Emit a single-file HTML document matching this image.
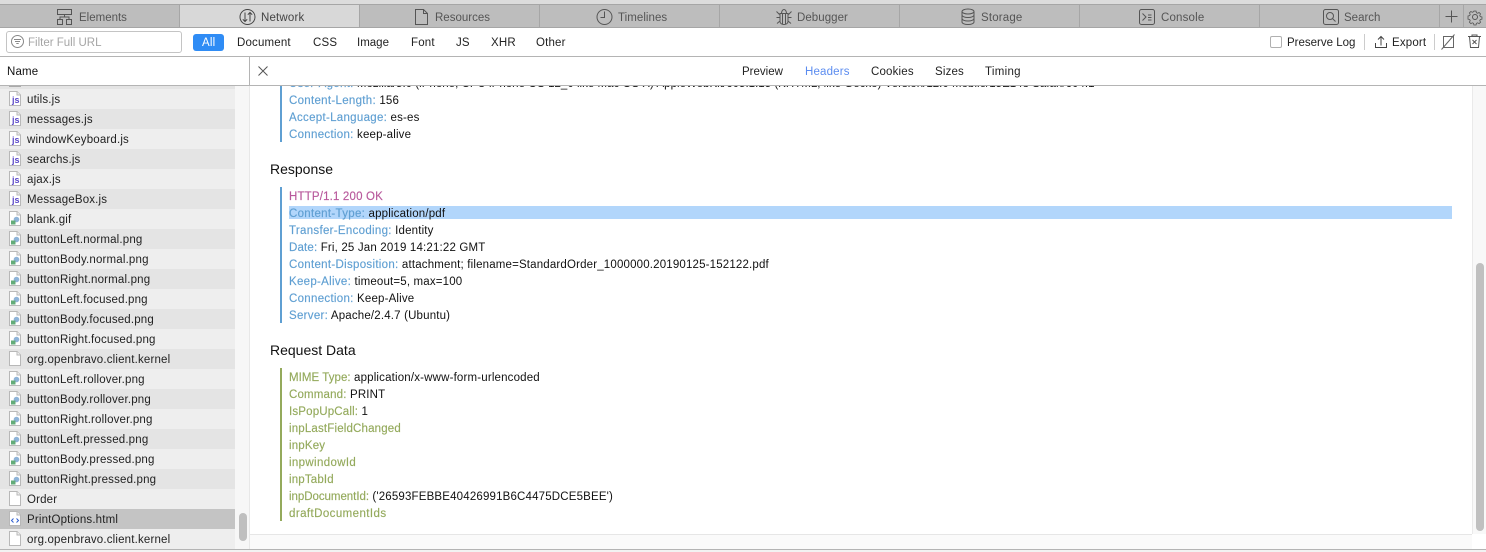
<!DOCTYPE html>
<html><head><meta charset="utf-8">
<style>
html,body{margin:0;padding:0;width:1486px;height:552px;overflow:hidden;background:#fff;font-family:"Liberation Sans",sans-serif;font-size:11.5px;letter-spacing:.17px;color:#222}
.a{position:absolute;white-space:nowrap}
.tab{position:absolute;top:5px;height:22px;background:#bdbdbd;border-right:1px solid #a6a6a6;box-sizing:content-box}
.tab span{position:absolute;top:2px;line-height:22px;color:#555;white-space:nowrap}
.tab svg{position:absolute;top:3px}
.tab.on{background:#d8d8d8}
.tab.on span{color:#444}
.row{position:absolute;left:0;width:235px;height:20px;background:#eeeeee}
.row.d{background:#e4e4e4}
.row.s{background:#c4c4c4}
.row span{position:absolute;left:27px;top:1px;line-height:20px;color:#222;white-space:nowrap}
.row svg{position:absolute;left:9px;top:2px;width:12px;height:15px}
.l{position:absolute;left:289px;white-space:nowrap;color:#111;height:17px;line-height:17px}
.b{color:#5f9fd2;letter-spacing:.3px;-webkit-text-stroke:.15px #5f9fd2}
.g{color:#94aa5c;-webkit-text-stroke:.15px #94aa5c}
.h{position:absolute;left:270px;font-size:14px;letter-spacing:0;color:#111;white-space:nowrap}
.f{position:absolute;top:36px;line-height:14px;color:#222;white-space:nowrap}
.sub{position:absolute;top:65px;line-height:14px;color:#222;white-space:nowrap}
</style></head><body>
<div class="a" style="left:0;top:0;width:1486px;height:4px;background:#dcdcdc"></div>
<div class="a" style="left:0;top:4px;width:1486px;height:1px;background:#a6a6a6"></div>
<div class="a" style="left:0;top:27px;width:1486px;height:1px;background:#a6a6a6"></div>

<div class="tab" style="left:0;width:179px"><svg style="left:56px" width="18" height="18" viewBox="0 0 18 18" fill="none" stroke="#555"><path d="M1.500 1.500h14v5h-14zM1.500 11.500h5v5h-5zM10.500 11.500h5v5h-5zM8.500 6.500v2.500M4 11.500V9h9v2.500"/></svg><span style="left:79px;letter-spacing:0">Elements</span></div>
<div class="tab on" style="left:180px;width:179px"><svg style="left:59px" width="18" height="18" viewBox="0 0 18 18" fill="none" stroke="#444"><circle cx="8.500" cy="9" r="7.500"/><path d="M6 4.500v9M3.800 11.300 6 13.500l2.200-2.200M11 13.500v-9M8.800 6.700 11 4.500l2.200 2.200"/></svg><span style="left:81px">Network</span></div>
<div class="tab" style="left:360px;width:179px"><svg style="left:54px" width="16" height="18" viewBox="0 0 16 18" fill="none" stroke="#555"><path d="M1.500 1.500h8l4 4v11h-12zM9.500 1.500v4h4"/></svg><span style="left:75px;letter-spacing:0">Resources</span></div>
<div class="tab" style="left:540px;width:179px"><svg style="left:56px" width="18" height="18" viewBox="0 0 18 18" fill="none" stroke="#555"><circle cx="8.500" cy="9" r="7.500"/><path d="M8.500 3.500V9.500H4.500"/></svg><span style="left:78px;letter-spacing:.05px">Timelines</span></div>
<div class="tab" style="left:720px;width:179px"><svg style="left:55px" width="18" height="18" viewBox="0 0 18 18" fill="none" stroke="#555"><path d="M5 5.500h8v8c0 2-2 3-4 3s-4-1-4-3zM6.500 5.500c0-2 1-4 2.500-4s2.500 2 2.500 4M7.500 6v10M10.500 6v10M1.500 3.500l3 3M16.500 3.500l-3 3M1.500 9.500H5M16.500 9.500H13M2 15.500l3-2.500M16 15.500l-3-2.500"/></svg><span style="left:77px;letter-spacing:.05px">Debugger</span></div>
<div class="tab" style="left:900px;width:179px"><svg style="left:61px" width="16" height="18" viewBox="0 0 16 18" fill="none" stroke="#555"><ellipse cx="7" cy="3.500" rx="6" ry="2.500"/><path d="M1 3.500v10.500c0 1.400 2.700 2.500 6 2.500s6-1.100 6-2.500V3.500M1 7c0 1.400 2.700 2.500 6 2.500S13 8.400 13 7M1 10.500c0 1.400 2.700 2.500 6 2.500s6-1.100 6-2.500"/></svg><span style="left:81px">Storage</span></div>
<div class="tab" style="left:1080px;width:179px"><svg style="left:58px" width="18" height="18" viewBox="0 0 18 18" fill="none" stroke="#555"><rect x="1.500" y="1.500" width="15" height="15" rx="2"/><path d="M4.500 5.500 8 9l-3.500 3.500M10 7h3.500M10 9.500h3.500M10 12h3.500"/></svg><span style="left:81px">Console</span></div>
<div class="tab" style="left:1260px;width:179px"><svg style="left:62px" width="18" height="18" viewBox="0 0 18 18" fill="none" stroke="#555"><rect x="1.500" y="1.500" width="15" height="15" rx="2"/><circle cx="8" cy="8" r="3.500"/><path d="m10.500 10.500 3 3"/></svg><span style="left:84px;letter-spacing:0">Search</span></div>
<div class="tab" style="left:1440px;width:23px"><svg style="left:3px;top:3px" width="17" height="17" viewBox="0 0 17 17" fill="none" stroke="#555"><path d="M8.500 2.500v12M2.500 8.500h12"/></svg></div>
<div class="tab" style="left:1464px;width:22px;border-right:0"><svg style="left:2px;top:3px" width="18" height="18" viewBox="0 0 18 18" fill="none" stroke="#555"><circle cx="9" cy="9" r="2.500"/><path d="M7.700 1.800h2.600l.4 2 1.500.7 1.800-1 1.800 1.800-1 1.800.7 1.500 2 .4v2.600l-2 .4-.7 1.500 1 1.800-1.800 1.800-1.800-1-1.500.7-.4 2H7.700l-.4-2-1.500-.7-1.800 1-1.800-1.800 1-1.800-.7-1.500-2-.4V7.800l2-.4.700-1.500-1-1.800 1.800-1.800 1.800 1 1.500-.7z" transform="translate(1.600 1.600) scale(.82)"/></svg></div>

<div class="a" style="left:6px;top:31px;width:174px;height:20px;border:1px solid #c4c4c4;border-radius:3px;background:#fff"></div>
<svg class="a" style="left:10px;top:34px" width="16" height="16" viewBox="0 0 16 16" fill="none" stroke="#888"><circle cx="7.500" cy="7.500" r="6"/><path d="M4 5.500h7M5 7.500h5M6.300 9.500h2.400"/></svg>
<div class="f" style="left:28px;color:#a5a5a5;letter-spacing:0">Filter Full URL</div>
<div class="a" style="left:193px;top:34px;width:31px;height:17px;background:#2f8cf5;border-radius:3px"></div>
<div class="f" style="left:202px;color:#fff">All</div>
<div class="f" style="left:237px">Document</div>
<div class="f" style="left:313px">CSS</div>
<div class="f" style="left:357px;letter-spacing:0">Image</div>
<div class="f" style="left:411px">Font</div>
<div class="f" style="left:456px">JS</div>
<div class="f" style="left:491px">XHR</div>
<div class="f" style="left:536px">Other</div>
<div class="a" style="left:1270px;top:36px;width:10px;height:10px;border:1px solid #b0b0b0;border-radius:2px;background:#fff"></div>
<div class="f" style="left:1287px;letter-spacing:0">Preserve Log</div>
<div class="a" style="left:1364px;top:34px;width:1px;height:16px;background:#ccc"></div>
<svg class="a" style="left:1374px;top:35px" width="14" height="15" viewBox="0 0 14 15" fill="none" stroke="#444"><path d="M7 10.500V1.500M4 4.500 7 1.500l3 3M1.500 8v4.500h11V8"/></svg>
<div class="f" style="left:1392px">Export</div>
<div class="a" style="left:1434px;top:34px;width:1px;height:16px;background:#ccc"></div>
<svg class="a" style="left:1440px;top:34px" width="16" height="16" viewBox="0 0 16 16" fill="none" stroke="#666"><path d="M3.500 2.500h10v11h-10zM1.500 15.500l13-15"/></svg>
<svg class="a" style="left:1467px;top:34px" width="15" height="15" viewBox="0 0 15 15" fill="none" stroke="#555"><path d="M1 2.500h13M5 2.500v-1.500h5v1.500M2.500 2.500l1 11h8l1-11M5.500 6l4 4M9.500 6l-4 4"/></svg>
<div class="a" style="left:0;top:56px;width:1486px;height:1px;background:#b4b4b4"></div>

<div class="sub" style="left:7px;color:#111">Name</div>
<div class="a" style="left:249px;top:57px;width:1px;height:28px;background:#b4b4b4"></div>
<svg class="a" style="left:257px;top:65px" width="12" height="12" viewBox="0 0 12 12" fill="none" stroke="#555"><path d="M1.500 1.500l9 9M10.500 1.500l-9 9"/></svg>
<div class="sub" style="left:742px;letter-spacing:0">Preview</div>
<div class="sub" style="left:805px;color:#5b8cf0">Headers</div>
<div class="sub" style="left:871px">Cookies</div>
<div class="sub" style="left:935px">Sizes</div>
<div class="sub" style="left:985px;letter-spacing:.3px">Timing</div>

<div class="a" style="left:0;top:86px;width:235px;height:3px;background:#e4e4e4"></div>
<div class="a" style="left:9px;top:86px;width:12px;height:1px;background:#aaa"></div>
<div class="a" style="left:235px;top:86px;width:14px;height:463px;background:#f7f7f7"></div>
<div class="a" style="left:249px;top:86px;width:1px;height:463px;background:#e8e8e8"></div>

<svg width="0" height="0" style="position:absolute"><defs>
<symbol id="js" viewBox="0 0 12 15"><path d="M.5.500h7.500l3.500 3.500v10.500H.500z" fill="#fff" stroke="#b8b8b8"/><path d="M8 .500v3.500h3.500" fill="#eee" stroke="#b8b8b8"/><text x="3" y="12" font-size="9" font-weight="bold" font-family="Liberation Sans" letter-spacing="0" fill="#5a48c8">js</text></symbol>
<symbol id="im" viewBox="0 0 12 15"><path d="M.5.500h7.500l3.500 3.500v10.500H.500z" fill="#fff" stroke="#b8b8b8"/><path d="M8 .500v3.500h3.500" fill="#eee" stroke="#b8b8b8"/><circle cx="7.500" cy="8.500" r="2.800" fill="#8fb4d8"/><rect x="2" y="9.500" width="4.500" height="4" fill="#62ab78"/></symbol>
<symbol id="fi" viewBox="0 0 12 15"><path d="M.5.500h7.500l3.500 3.500v10.500H.500z" fill="#fff" stroke="#b8b8b8"/><path d="M8 .500v3.500h3.500" fill="#f2f2f2" stroke="#b8b8b8"/></symbol>
<symbol id="ht" viewBox="0 0 12 15"><path d="M.5.500h7.500l3.500 3.500v10.500H.500z" fill="#fff" stroke="#b8b8b8"/><path d="M8 .500v3.500h3.500" fill="#eee" stroke="#b8b8b8"/><path d="M4.500 7.500 2.500 9.500l2 2M7.500 7.500l2 2-2 2" fill="none" stroke="#2f5fd0"/></symbol>
</defs></svg>

<div class="row" style="top:89px"><svg><use href="#js"/></svg><span>utils.js</span></div>
<div class="row d" style="top:109px"><svg><use href="#js"/></svg><span>messages.js</span></div>
<div class="row" style="top:129px"><svg><use href="#js"/></svg><span>windowKeyboard.js</span></div>
<div class="row d" style="top:149px"><svg><use href="#js"/></svg><span>searchs.js</span></div>
<div class="row" style="top:169px"><svg><use href="#js"/></svg><span>ajax.js</span></div>
<div class="row d" style="top:189px"><svg><use href="#js"/></svg><span>MessageBox.js</span></div>
<div class="row" style="top:209px"><svg><use href="#im"/></svg><span>blank.gif</span></div>
<div class="row d" style="top:229px"><svg><use href="#im"/></svg><span>buttonLeft.normal.png</span></div>
<div class="row" style="top:249px"><svg><use href="#im"/></svg><span>buttonBody.normal.png</span></div>
<div class="row d" style="top:269px"><svg><use href="#im"/></svg><span>buttonRight.normal.png</span></div>
<div class="row" style="top:289px"><svg><use href="#im"/></svg><span>buttonLeft.focused.png</span></div>
<div class="row d" style="top:309px"><svg><use href="#im"/></svg><span>buttonBody.focused.png</span></div>
<div class="row" style="top:329px"><svg><use href="#im"/></svg><span>buttonRight.focused.png</span></div>
<div class="row d" style="top:349px"><svg><use href="#fi"/></svg><span>org.openbravo.client.kernel</span></div>
<div class="row" style="top:369px"><svg><use href="#im"/></svg><span>buttonLeft.rollover.png</span></div>
<div class="row d" style="top:389px"><svg><use href="#im"/></svg><span>buttonBody.rollover.png</span></div>
<div class="row" style="top:409px"><svg><use href="#im"/></svg><span>buttonRight.rollover.png</span></div>
<div class="row d" style="top:429px"><svg><use href="#im"/></svg><span>buttonLeft.pressed.png</span></div>
<div class="row" style="top:449px"><svg><use href="#im"/></svg><span>buttonBody.pressed.png</span></div>
<div class="row d" style="top:469px"><svg><use href="#im"/></svg><span>buttonRight.pressed.png</span></div>
<div class="row" style="top:489px"><svg><use href="#fi"/></svg><span>Order</span></div>
<div class="row s" style="top:509px"><svg><use href="#ht"/></svg><span>PrintOptions.html</span></div>
<div class="row" style="top:529px"><svg><use href="#fi"/></svg><span>org.openbravo.client.kernel</span></div>
<div class="a" style="left:239px;top:513px;width:8px;height:28px;background:#bfbfbf;border-radius:4px"></div>

<div class="a" style="left:280px;top:86px;width:2px;height:56px;background:#5f9fd2"></div>
<div class="a" style="left:289px;top:86px;width:1100px;height:4px;overflow:hidden"><div class="a" style="left:0;top:-10px;line-height:17px;color:#111;letter-spacing:.02px"><span class="b">User-Agent:</span> Mozilla/5.0 (iPhone; CPU iPhone OS 12_0 like Mac OS X) AppleWebKit/605.1.15 (KHTML, like Gecko) Version/12.0 Mobile/15E148 Safari/604.1</div></div>
<div class="l" style="top:93px"><span class="b">Content-Length:</span> 156</div>
<div class="l" style="top:110px"><span class="b">Accept-Language:</span> es-es</div>
<div class="l" style="top:127px"><span class="b">Connection:</span> keep-alive</div>

<div class="h" style="top:161px">Response</div>
<div class="a" style="left:280px;top:187px;width:2px;height:136px;background:#5f9fd2"></div>
<div class="l" style="top:189px;color:#b8599c;-webkit-text-stroke:.15px #b8599c">HTTP/1.1 200 OK</div>
<div class="a" style="left:289px;top:206px;width:1163px;height:13px;background:#b2d6fb"></div>
<div class="l" style="top:206px"><span class="b">Content-Type:</span> application/pdf</div>
<div class="l" style="top:223px"><span class="b">Transfer-Encoding:</span> Identity</div>
<div class="l" style="top:240px"><span class="b" style="letter-spacing:.17px">Date:</span> Fri, 25 Jan 2019 14:21:22 GMT</div>
<div class="l" style="top:257px"><span class="b">Content-Disposition:</span> attachment; filename=StandardOrder_1000000.20190125-152122.pdf</div>
<div class="l" style="top:274px"><span class="b">Keep-Alive:</span> timeout=5, max=100</div>
<div class="l" style="top:291px"><span class="b">Connection:</span> Keep-Alive</div>
<div class="l" style="top:308px"><span class="b">Server:</span> Apache/2.4.7 (Ubuntu)</div>

<div class="h" style="top:342px">Request Data</div>
<div class="a" style="left:280px;top:368px;width:2px;height:153px;background:#94aa5c"></div>
<div class="l" style="top:370px"><span class="g" style="letter-spacing:.05px">MIME Type:</span> application/x-www-form-urlencoded</div>
<div class="l" style="top:387px"><span class="g">Command:</span> PRINT</div>
<div class="l" style="top:404px"><span class="g">IsPopUpCall:</span> 1</div>
<div class="l g" style="top:421px">inpLastFieldChanged</div>
<div class="l g" style="top:438px">inpKey</div>
<div class="l g" style="top:455px;letter-spacing:.35px">inpwindowId</div>
<div class="l g" style="top:472px">inpTabId</div>
<div class="l" style="top:489px"><span class="g" style="letter-spacing:-.04px">inpDocumentId:</span> ('26593FEBBE40426991B6C4475DCE5BEE')</div>
<div class="l g" style="top:506px;letter-spacing:.42px">draftDocumentIds</div>

<div class="a" style="left:250px;top:534px;width:1222px;height:1px;background:#e6e6e6"></div>
<div class="a" style="left:250px;top:535px;width:1222px;height:14px;background:#fafafa"></div>
<div class="a" style="left:1472px;top:86px;width:14px;height:448px;background:#f8f8f8;border-left:1px solid #eaeaea;box-sizing:border-box"></div>
<div class="a" style="left:1476px;top:263px;width:8px;height:268px;background:#c0c0c0;border-radius:4px"></div>
<div class="a" style="left:0;top:85px;width:1486px;height:1px;background:#b4b4b4"></div>
<div class="a" style="left:0;top:549px;width:1486px;height:1px;background:#b4b4b4"></div>
<div class="a" style="left:0;top:550px;width:1486px;height:2px;background:#f2f2f2"></div>
</body></html>
